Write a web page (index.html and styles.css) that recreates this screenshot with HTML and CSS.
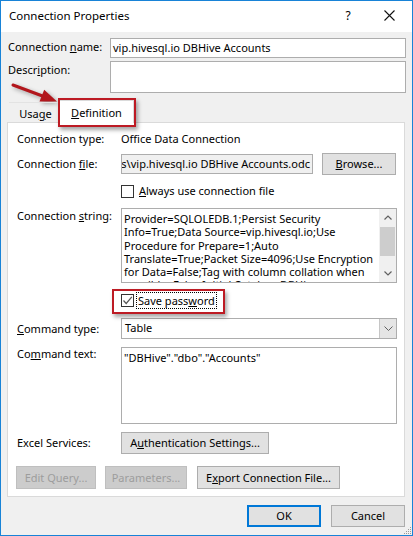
FILE: index.html
```html
<!DOCTYPE html>
<html>
<head>
<meta charset="utf-8">
<title>Connection Properties</title>
<link rel="stylesheet" href="styles.css">
</head>
<body>
<div class="window">
  <div class="titlebar">
    <span class="title">Connection Properties</span>
    <span class="help">?</span>
    <svg class="close" width="11" height="11" viewBox="0 0 11 11"><path d="M0.5 0.5 L10.5 10.5 M10.5 0.5 L0.5 10.5" stroke="#111" stroke-width="1.1" fill="none"/></svg>
  </div>
  <div class="content">
    <div class="top-row">
      <span class="top-label">Connection <u>n</u>ame:</span>
      <div class="field name-field">vip.hivesql.io DBHive Accounts</div>
    </div>
    <div class="top-row desc-row">
      <span class="top-label">Descr<u>i</u>ption:</span>
      <div class="field desc-field"></div>
    </div>
    <div class="tabs">
      <div class="tab">Usa<u>g</u>e</div>
      <div class="tab active"><u>D</u>efinition</div>
    </div>
    <div class="panel">
      <div class="row r-type"><span class="lbl">Connection type:</span><span>Office Data Connection</span></div>
      <div class="row r-file">
        <span class="lbl">Connection <u>f</u>ile:</span>
        <div class="file-ctl">
          <div class="field file-field"><span class="file-path">es\vip.hivesql.io DBHive Accounts.odc</span></div>
          <button class="btn browse"><u>B</u>rowse...</button>
        </div>
      </div>
      <div class="row indent r-always"><span class="chk"></span><span class="chk-text"><u>A</u>lways use connection file</span></div>
      <div class="row r-cs">
        <span class="lbl">Connection <u>s</u>tring:</span>
        <div class="field cs-field">
          <div class="cs-text">Provider=SQLOLEDB.1;Persist Security<br>Info=True;Data Source=vip.hivesql.io;Use<br>Procedure for Prepare=1;Auto<br>Translate=True;Packet Size=4096;Use Encryption<br>for Data=False;Tag with column collation when<br>possible=False;Initial Catalog=DBHive</div>
          <div class="vscroll">
            <div class="sb-arrow"><svg width="8" height="5" viewBox="0 0 8 5"><path d="M0.5 4.5 L4 1 L7.5 4.5" stroke="#606060" stroke-width="1.2" fill="none"/></svg></div>
            <div class="sb-thumb"></div>
            <div class="sb-track"></div>
            <div class="sb-arrow"><svg width="8" height="5" viewBox="0 0 8 5"><path d="M0.5 0.5 L4 4 L7.5 0.5" stroke="#606060" stroke-width="1.2" fill="none"/></svg></div>
          </div>
        </div>
      </div>
      <div class="row indent r-save">
        <span class="chk checked"><svg width="11" height="11" viewBox="0 0 11 11"><path d="M1.5 5.5 L4.2 8.5 L9.8 1.8" stroke="#555" stroke-width="1.2" fill="none"/></svg></span>
        <span class="focus">Save pass<u>w</u>ord</span>
      </div>
      <div class="row r-ctype">
        <span class="lbl"><u>C</u>ommand type:</span>
        <div class="field select"><span class="sel-val">Table</span><span class="dd"><svg width="9" height="5" viewBox="0 0 9 5"><path d="M0.5 0.5 L4.5 4.5 L8.5 0.5" stroke="#606060" stroke-width="1" fill="none"/></svg></span></div>
      </div>
      <div class="row r-ctext">
        <span class="lbl">Co<u>m</u>mand text:</span>
        <div class="field ctext-field">"DBHive"."dbo"."Accounts"</div>
      </div>
      <div class="row r-excel">
        <span class="lbl">Excel Services:</span>
        <div><button class="btn auth">A<u>u</u>thentication Settings...</button></div>
      </div>
      <div class="btn-row">
        <button class="btn dis edit">Edit Query...</button>
        <button class="btn dis params">Parameters...</button>
        <button class="btn export">E<u>x</u>port Connection File...</button>
      </div>
    </div>
    <div class="footer">
      <button class="btn ok">OK</button>
      <button class="btn cancel">Cancel</button>
    </div>
  </div>
  <svg class="grip" width="10" height="10" viewBox="0 0 10 10">
    <rect x="8" y="2" width="1" height="1" fill="#9a9a9a"/>
    <rect x="6" y="4" width="1" height="1" fill="#9a9a9a"/>
    <rect x="8" y="4" width="1" height="1" fill="#9a9a9a"/>
    <rect x="4" y="6" width="1" height="1" fill="#9a9a9a"/>
    <rect x="6" y="6" width="1" height="1" fill="#9a9a9a"/>
    <rect x="8" y="6" width="1" height="1" fill="#9a9a9a"/>
    <rect x="2" y="8" width="1" height="1" fill="#9a9a9a"/>
    <rect x="4" y="8" width="1" height="1" fill="#9a9a9a"/>
    <rect x="6" y="8" width="1" height="1" fill="#9a9a9a"/>
    <rect x="8" y="8" width="1" height="1" fill="#9a9a9a"/>
  </svg>
  <svg class="arrow" width="70" height="30" viewBox="0 0 70 30">
    <path d="M12 4 L41.5 15" stroke="#b2161c" stroke-width="3" stroke-linecap="round"/>
    <polygon points="56,20.5 38.5,20.5 43.2,8.8" fill="#b2161c"/>
  </svg>
  <div class="callout callout-tab"></div>
  <div class="callout callout-save"></div>
</div>
</body>
</html>
```
FILE: styles.css
```css
* { box-sizing: border-box; }
html, body { margin: 0; padding: 0; background: #ffffff; }
body {
  font-family: "Noto Sans", "Open Sans", sans-serif;
  font-size: 11px;
  line-height: 16px;
  color: #000;
}
u { text-decoration: underline; text-underline-offset: 1px; }

.window {
  position: relative;
  width: 413px;
  height: 536px;
  border: 1px solid #1883d7;
  background: #f0f0f0;
  display: flex;
  flex-direction: column;
  overflow: hidden;
}

.titlebar {
  height: 31px;
  flex: none;
  background: #fff;
  display: flex;
  align-items: center;
  padding: 0 17px 2px 8px;
}
.title { flex: 1; font-size: 11.5px; }
.help { width: 12px; text-align: center; margin-right: 30px; font-size: 12px; }
.close { display: block; }

.content {
  flex: 1;
  display: flex;
  flex-direction: column;
  padding: 6px 7px 0 6px;
}

.field {
  background: #fff;
  border: 1px solid #adadad;
}

.top-row {
  display: flex;
  margin: 0 -1px 0 1px;
}
.top-label { width: 102px; flex: none; white-space: nowrap; }
.name-field { flex: 1; height: 20px; padding: 1px 2px; line-height: 16px; }
.desc-row { margin-top: 3px; }
.desc-field { flex: 1; height: 32px; }
.top-row .top-label { padding-top: 1px; }

.tabs {
  display: flex;
  margin: 7px 0 -1px 2px;
  height: 23px;
  position: relative;
  z-index: 1;
}
.tab {
  height: 20px;
  margin-top: 2px;
  width: 50px;
  text-align: center;
  border-top: 1px solid #e3e3e3;
  padding-top: 3px;
  padding-left: 3px;
}
.tab.active {
  width: 75px;
  height: 23px;
  margin-top: 0;
  background: #fff;
  border: 1px solid #dadada;
  border-bottom: none;
  padding-top: 4px;
  padding-left: 0;
}

.panel {
  background: #fff;
  border: 1px solid #dadada;
  padding: 8px 7px 7px 9px;
  display: flex;
  flex-direction: column;
}

.row {
  display: flex;
  align-items: center;
}
.lbl { width: 104px; flex: none; white-space: nowrap; }
.indent { padding-left: 104px; }

.r-type { height: 16px; }
.r-file { margin-top: 6px; height: 22px; }
.file-ctl { display: flex; align-items: center; }
.file-field {
  width: 192px;
  height: 20px;
  background: #f0f0f0;
  display: flex;
  justify-content: flex-end;
  overflow: hidden;
  white-space: nowrap;
  padding: 1px 2px 0 0;
}
.file-path { flex: none; }
.btn {
  font: inherit;
  font-size: 11px;
  color: #000;
  background: #e1e1e1;
  border: 1px solid #adadad;
  padding: 0;
  margin: 0;
  height: 22px;
  line-height: 18px;
  text-align: center;
  white-space: nowrap;
}
.browse { width: 74px; margin-left: 9px; }

.r-always { margin-top: 8px; height: 16px; }
.chk {
  width: 13px;
  height: 13px;
  border: 1px solid #333;
  background: #fff;
  flex: none;
  display: flex;
  align-items: center;
  justify-content: center;
}
.chk svg { display: block; }
.chk-text { margin-left: 5px; }

.r-cs { margin-top: 9px; align-items: flex-start; }
.cs-field {
  width: 276px;
  height: 75px;
  display: flex;
  overflow: hidden;
}
.cs-text {
  flex: 1;
  overflow: hidden;
  white-space: nowrap;
  line-height: 13.3px;
  padding: 3px 0 0 2px;
}
.vscroll {
  width: 17px;
  flex: none;
  background: #f0f0f0;
  display: flex;
  flex-direction: column;
}
.sb-arrow {
  height: 17px;
  display: flex;
  align-items: center;
  justify-content: center;
}
.sb-arrow svg { display: block; }
.sb-thumb { height: 29px; margin: 1px 1px 0; background: #cdcdcd; }
.sb-track { flex: 1; }

.r-save { margin-top: 9px; height: 17px; }
.focus {
  margin-left: 2px;
  padding: 0 1px;
  border: 1px dotted #000;
  line-height: 15px;
}

.r-ctype { margin-top: 9px; }
.select {
  width: 276px;
  height: 21px;
  display: flex;
  align-items: stretch;
}
.sel-val { flex: 1; padding: 1px 0 0 3px; }
.dd {
  width: 17px;
  background: #e5e5e5;
  border-left: 1px solid #c6c6c6;
  display: flex;
  align-items: center;
  justify-content: center;
}
.dd svg { display: block; }

.r-ctext { margin-top: 8px; align-items: flex-start; }
.r-ctext .lbl { margin-top: -1px; }
.ctext-field {
  width: 276px;
  height: 77px;
  padding: 2px 0 0 2px;
  line-height: 16px;
}

.r-excel { margin-top: 8px; }
.auth { width: 148px; }

.btn-row {
  display: flex;
  margin: 12px 0 0 -1px;
}
.btn-row .btn { height: 23px; }
.dis {
  background: #cccccc;
  border-color: #bfbfbf;
  color: #9d9d9d;
}
.edit { width: 80px; }
.params { width: 82px; margin-left: 9px; }
.export { width: 143px; margin-left: 10px; }

.footer {
  display: flex;
  justify-content: flex-end;
  margin-top: 8px;
}
.ok { width: 74px; border: 2px solid #0078d7; line-height: 16px; }
.cancel { width: 74px; margin-left: 10px; }

.grip { position: absolute; right: 0; bottom: 0; }

.arrow {
  position: absolute;
  left: 0;
  top: 80px;
  filter: drop-shadow(2px 2px 2px rgba(0,0,0,0.35));
}
.callout {
  position: absolute;
  border: 2px solid #bd1b24;
  box-shadow: 2px 3px 4px rgba(0,0,0,0.35);
  z-index: 2;
}
.callout-tab { left: 57px; top: 97px; width: 78px; height: 29px; }
.callout-save { left: 111px; top: 288px; width: 113px; height: 25px; }
```
